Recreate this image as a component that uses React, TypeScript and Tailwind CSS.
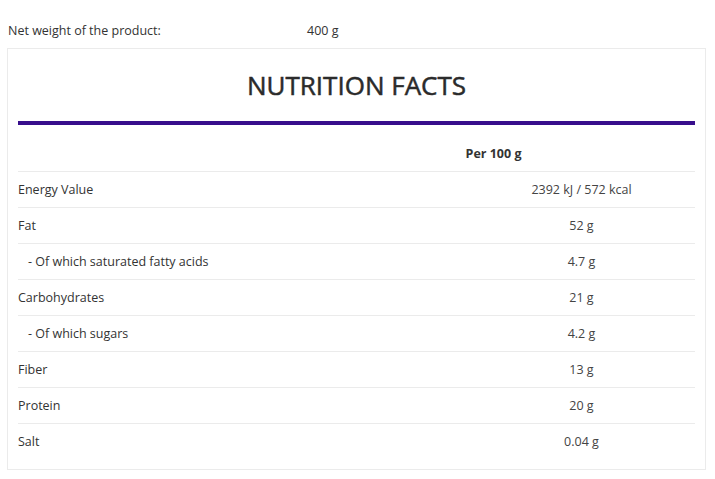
import React from "react";

const rows: { label: string; value: string; sub?: boolean }[] = [
  { label: "Energy Value", value: "2392 kJ / 572 kcal" },
  { label: "Fat", value: "52 g" },
  { label: "- Of which saturated fatty acids", value: "4.7 g", sub: true },
  { label: "Carbohydrates", value: "21 g" },
  { label: "- Of which sugars", value: "4.2 g", sub: true },
  { label: "Fiber", value: "13 g" },
  { label: "Protein", value: "20 g" },
  { label: "Salt", value: "0.04 g" },
];

export default function App() {
  return (
    <div className="min-h-[479px] w-[715px] bg-white font-['Open_Sans',sans-serif] text-[12.5px] text-[#333]">
      {/* Net weight */}
      <div className="flex h-[48px] items-center pl-[8px] pt-[14px]">
        <span className="w-[299px]">Net weight of the product:</span>
        <span>400 g</span>
      </div>

      {/* Card */}
      <div className="ml-[7px] w-[699px] border border-[#ebebeb] px-[10px] pb-[10px]">
        <h2 className="pt-[18px] text-center text-[26px] leading-[36px] text-[#2b2b2b] [-webkit-text-stroke:0.5px_#2b2b2b]">
          NUTRITION FACTS
        </h2>
        <div className="mt-[18px] h-[4px] bg-[#380e8c]" />

        <div className="mt-[10px] flex h-[36px] items-center pt-[2px]">
          <div className="w-[274px]" />
          <div className="flex-1 text-center font-bold">Per 100 g</div>
        </div>

        {rows.map((r) => (
          <div
            key={r.label}
            className="flex h-[36px] items-center border-t border-[#ebebeb] pt-[2px]"
          >
            <div className={`w-[450px] ${r.sub ? "pl-[10px]" : ""}`}>{r.label}</div>
            <div className="flex-1 text-center text-[#444]">{r.value}</div>
          </div>
        ))}
      </div>
    </div>
  );
}
